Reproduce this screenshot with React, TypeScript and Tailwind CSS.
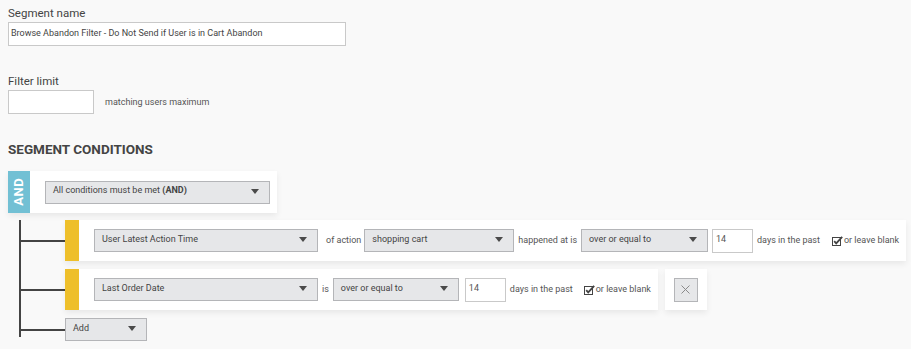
import React from "react";

const Caret = () => (
  <svg width="8" height="5" viewBox="0 0 8 5" className="shrink-0">
    <path d="M0 0h8L4 5z" fill="#4a4a4a" />
  </svg>
);

function Select({ className, children }: { className: string; children: React.ReactNode }) {
  return (
    <div
      className={
        "flex h-[23px] shrink-0 items-center justify-between border border-[#b4b5b8] bg-[#e6e7e9] pl-[7px] pr-[10px] pb-[2px] text-[9px] text-[#444] " +
        className
      }
    >
      <span className="whitespace-nowrap">{children}</span>
      <Caret />
    </div>
  );
}

const NumInput = () => (
  <div className="flex h-[24px] w-[41px] shrink-0 items-center border border-[#c9c9c9] bg-white pl-[3px] pb-[2px] text-[9px] text-[#555]">
    14
  </div>
);

const Check = () => (
  <svg width="11" height="10" viewBox="0 0 11 10" className="shrink-0">
    <rect x="0.5" y="1.5" width="8" height="8" fill="white" stroke="#444" strokeWidth="1" />
    <path d="M2.2 5.2 L4.2 7.4 L10.2 0.8" fill="none" stroke="#444" strokeWidth="1.8" />
  </svg>
);

const Txt = ({ className = "", children }: { className?: string; children: React.ReactNode }) => (
  <span className={"shrink-0 whitespace-nowrap text-[9px] text-[#555] " + className}>{children}</span>
);

export default function App() {
  return (
    <div
      className="h-[349px] w-full overflow-hidden bg-[#f9f9f9] px-[8px] pt-[6px]"
      style={{ fontFamily: "Roboto, 'Liberation Sans', sans-serif" }}
    >
      <div className="text-[11.5px] leading-[14px] text-[#444]">Segment name</div>
      <div className="mt-[2px] flex h-[24px] w-[338px] items-center border border-[#c9c9c9] bg-white pl-[2px] pb-[1px] text-[9px] text-[#444]">
        Browse Abandon Filter - Do Not Send if User is in Cart Abandon
      </div>

      <div className="mt-[28px] text-[11.5px] leading-[14px] text-[#444]">Filter limit</div>
      <div className="mt-[2px] flex items-center">
        <div className="h-[24px] w-[86px] border border-[#c9c9c9] bg-white" />
        <Txt className="ml-[11px] pt-[1px] text-[8.7px]">matching users maximum</Txt>
      </div>

      <div className="mt-[27px] text-[13.5px] font-bold leading-[16px] text-[#444]">SEGMENT CONDITIONS</div>

      <div className="mt-[14px] flex h-[42px] w-[269px] bg-white shadow-[0_3px_6px_rgba(0,0,0,0.07)]">
        <div className="flex w-[22px] shrink-0 items-center justify-center bg-[#72c0d4]">
          <span className="-rotate-90 text-[13px] font-bold tracking-[0.5px] text-white">AND</span>
        </div>
        <div className="flex items-center pl-[15px]">
          <Select className="w-[225px]">
            All conditions must be met <b className="font-bold">(AND)</b>
          </Select>
        </div>
      </div>

      <div className="relative pl-[11px]">
        <div className="absolute left-[11px] top-0 h-[117px] w-[2px] bg-[#444]" />

        <div className="mt-[7px] flex items-center">
          <div className="h-[2px] w-[46px] shrink-0 bg-[#444]" />
          <div className="flex h-[41px] shrink-0 bg-white shadow-[0_3px_6px_rgba(0,0,0,0.07)]">
            <div className="w-[14px] bg-[#eebf2a]" />
            <div className="flex items-center pl-[15px] pr-[7px]">
              <Select className="w-[224px]">User Latest Action Time</Select>
              <Txt className="ml-[8px]">of action</Txt>
              <Select className="ml-[3px] w-[150px]">shopping cart</Select>
              <Txt className="ml-[4px]">happened at is</Txt>
              <Select className="ml-[4px] w-[127px]">over or equal to</Select>
              <div className="ml-[4px] shrink-0"><NumInput /></div>
              <Txt className="ml-[4px]">days in the past</Txt>
              <div className="ml-[12px] flex shrink-0 items-center gap-[1px]">
                <Check />
                <Txt>or leave blank</Txt>
              </div>
            </div>
          </div>
        </div>

        <div className="mt-[8px] flex items-center">
          <div className="h-[2px] w-[46px] shrink-0 bg-[#444]" />
          <div className="flex h-[41px] shrink-0 bg-white shadow-[0_3px_6px_rgba(0,0,0,0.07)]">
            <div className="w-[14px] bg-[#eebf2a]" />
            <div className="flex items-center pl-[15px] pr-[7px]">
              <Select className="w-[224px]">Last Order Date</Select>
              <Txt className="ml-[4px]">is</Txt>
              <Select className="ml-[4px] w-[126px]">over or equal to</Select>
              <div className="ml-[6px] shrink-0"><NumInput /></div>
              <Txt className="ml-[4px]">days in the past</Txt>
              <div className="ml-[11px] flex shrink-0 items-center gap-[1px]">
                <Check />
                <Txt>or leave blank</Txt>
              </div>
            </div>
          </div>
          <div className="ml-[7px] flex h-[41px] w-[42px] shrink-0 items-center justify-center bg-white shadow-[0_3px_6px_rgba(0,0,0,0.07)]">
            <div className="flex h-[24px] w-[24px] items-center justify-center border border-[#b4b5b8] bg-[#e6e7e9]">
              <svg width="9" height="9" viewBox="0 0 9 9">
                <path d="M0.5 0.5 L8.5 8.5 M8.5 0.5 L0.5 8.5" stroke="#8a8a8a" strokeWidth="1" />
              </svg>
            </div>
          </div>
        </div>

        <div className="mt-[8px] flex items-center">
          <div className="h-[2px] w-[46px] shrink-0 bg-[#444]" />
          <Select className="w-[82px]">Add</Select>
        </div>
      </div>
    </div>
  );
}
